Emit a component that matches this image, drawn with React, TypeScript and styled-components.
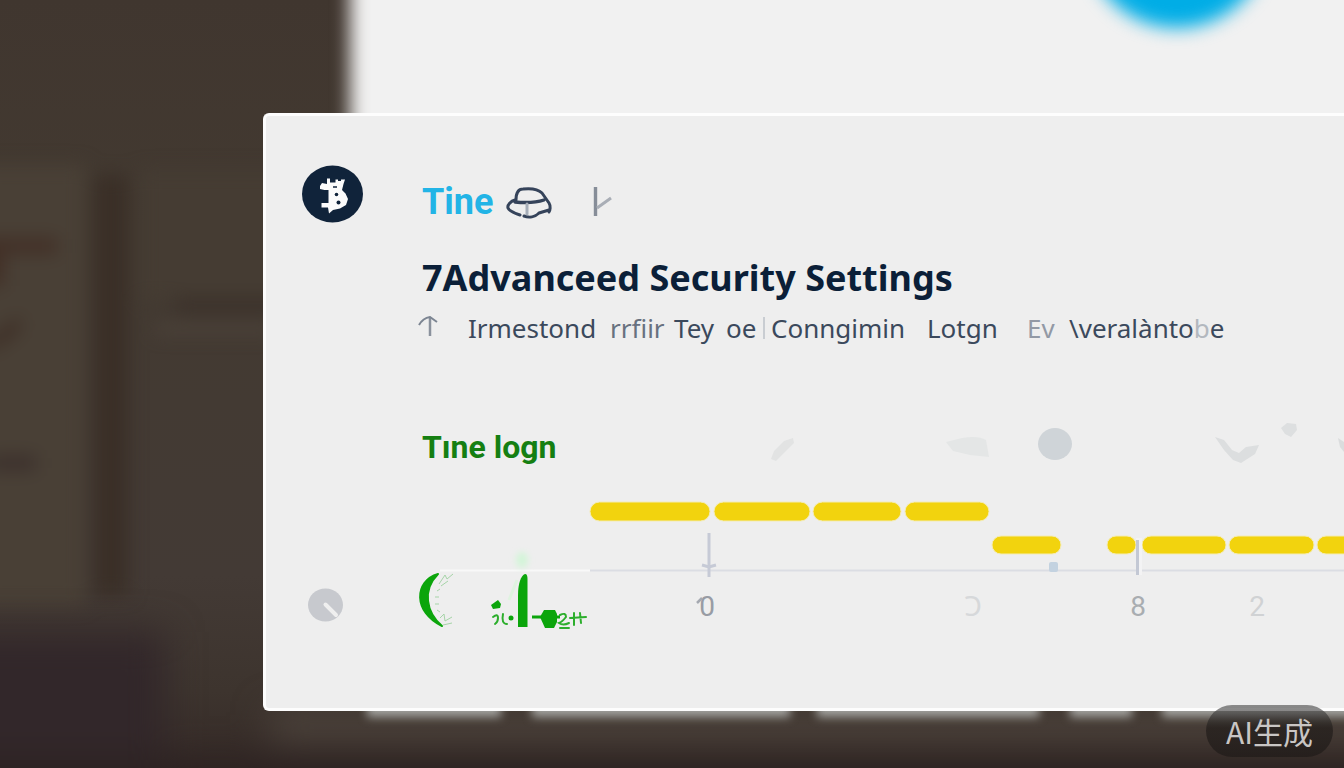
import React from "react";
import styled, { createGlobalStyle } from "styled-components";

const color = {
  ink: "#0b1f38",
  body: "#3b495c",
  faint: "#9299a5",
  pale: "#c9cdd2",
  cyan: "#22b4e6",
  green: "#157f12",
  leaf: "#0ba50b",
  bar: "#f2d30e",
  panel: "#eeeeee",
};

const sans = `"Noto Sans", "Noto Sans CJK SC", sans-serif`;
const display = `Roboto, "Noto Sans", sans-serif`;

const GlobalStyle = createGlobalStyle`
  *, *::before, *::after { box-sizing: border-box; }
  body { margin: 0; background: #3e342e; font-family: ${sans}; color: ${color.ink}; }
  h1, h2, p { margin: 0; }
`;

const Page = styled.div`
  position: relative;
  min-height: 100vh;
  padding: 113px 0 56px 263px;
  overflow: hidden;
`;

const Backdrop = styled.svg`
  position: absolute;
  inset: 0;
  width: 100%;
  height: 100%;

  filter {
    color-interpolation-filters: sRGB;
  }
`;

const Panel = styled.main`
  position: relative;
  padding: 48px 0 32px 36px;
  background: ${color.panel};
  border: 3px solid #fdfdfd;
  border-right: 0;
  border-radius: 6px 0 0 6px;
  display: grid;
  grid-template-columns: 120px minmax(0, 1fr);
  overflow: hidden;
`;

const RailIcon = styled.svg<{ $inset?: number }>`
  display: block;
  align-self: end;
  margin-left: ${(p) => p.$inset ?? 0}px;
`;

const Badge = styled(RailIcon)`
  align-self: start;
`;

const Header = styled.header`
  display: flex;
  flex-direction: column;
`;

const BrandRow = styled.div`
  display: flex;
  align-items: center;
  height: 76px;
  gap: 12px;
`;

const Brand = styled.a`
  font: 700 36px/40px ${display};
  color: ${color.cyan};
  text-decoration: none;
`;

const BrandIcon = styled.svg`
  display: block;
  flex: none;
`;

const Title = styled.h1`
  font: 700 36px/44px ${sans};
  white-space: nowrap;
  padding-top: 16px;
`;

const Summary = styled.p`
  display: grid;
  grid-template-columns: 46px 142px 64px 52px 37px 8px 156px 100px 42px auto;
  justify-content: start;
  font: 400 26px/56px ${sans};
  white-space: nowrap;
`;

const Word = styled.span<{ $tone?: string }>`
  color: ${(p) => p.$tone ?? color.body};
`;

const Caret = styled.span`
  align-self: center;
  height: 22px;
  border-left: 2px solid ${color.pale};
`;

const ArrowMark = styled.svg`
  display: block;
  margin-top: 14px;
`;

const SectionHead = styled.div`
  grid-column: 2;
  display: flex;
  align-items: center;
  justify-content: space-between;
  height: 64px;
  margin-top: 59px;
`;

const SectionTitle = styled.h2`
  font: 700 32px/40px ${display};
  color: ${color.green};
  white-space: nowrap;
`;

const Marks = styled.svg`
  display: block;
  flex: none;
`;

const Timeline = styled.svg`
  display: block;
  overflow: visible;
`;

const Tick = styled.text<{ $tone: string }>`
  font: 400 28px ${display};
  fill: ${(p) => p.$tone};
  text-anchor: middle;
`;

const Watermark = styled.aside`
  position: absolute;
  right: 11px;
  bottom: 11px;
  padding: 0 20px;
  border-radius: 26px;
  background: linear-gradient(rgba(70, 70, 70, 0.6), rgba(28, 24, 22, 0.62) 45%);
  color: #c9c6c4;
  font: 400 30px/52px "Noto Sans CJK SC", sans-serif;
`;

const bars = [
  { x: 590, y: 502, w: 120, h: 19 },
  { x: 714, y: 502, w: 96, h: 19 },
  { x: 813, y: 502, w: 88, h: 19 },
  { x: 905, y: 502, w: 84, h: 19 },
  { x: 992, y: 536, w: 69, h: 18 },
  { x: 1107, y: 536, w: 29, h: 18 },
  { x: 1142, y: 536, w: 84, h: 18 },
  { x: 1229, y: 536, w: 85, h: 18 },
  { x: 1317, y: 536, w: 60, h: 18 },
];

const ticks = [
  { x: 707, label: "0", tone: "#989ca4" },
  { x: 973, label: "Ɔ", tone: "#d6d8da" },
  { x: 1138, label: "8", tone: "#a9adb1" },
  { x: 1257, label: "2", tone: "#d0d2d4" },
];

function Scene() {
  return (
    <Backdrop viewBox="0 0 1344 768" preserveAspectRatio="none" aria-hidden="true">
      <defs>
        <filter id="soft" x="-50%" y="-50%" width="200%" height="200%">
          <feGaussianBlur stdDeviation="9" />
        </filter>
        <filter id="mist" filterUnits="userSpaceOnUse" x="-200" y="560" width="1744" height="400">
          <feGaussianBlur stdDeviation="18" />
        </filter>
        <filter id="edge" filterUnits="userSpaceOnUse" x="300" y="640" width="1200" height="120">
          <feGaussianBlur stdDeviation="5" />
        </filter>
        <linearGradient id="wall" x1="0" y1="0" x2="0" y2="1">
          <stop offset="0" stopColor="#40362f" />
          <stop offset="0.3" stopColor="#433a31" />
          <stop offset="0.75" stopColor="#433a35" />
          <stop offset="0.9" stopColor="#3d342e" />
          <stop offset="1" stopColor="#352a27" />
        </linearGradient>
      </defs>
      <rect width="1344" height="768" fill="url(#wall)" />
      <g filter="url(#soft)">
        <rect x="-20" y="165" width="105" height="440" fill="#494036" />
        <rect x="94" y="175" width="34" height="420" fill="#3a2f27" />
        <rect x="140" y="170" width="150" height="130" fill="#453c33" />
        <rect x="-20" y="238" width="78" height="16" fill="#422f26" />
        <rect x="-20" y="242" width="24" height="44" fill="#422f26" />
        <path d="M-10 340L20 316V330L-10 352Z" fill="#3c2b23" />
        <rect x="-10" y="456" width="46" height="14" fill="#3a2e2b" />
        <rect x="175" y="297" width="110" height="16" fill="#3c322b" />
        <rect x="155" y="325" width="120" height="8" fill="#4e453c" />
      </g>
      <g filter="url(#mist)">
        <rect x="-60" y="632" width="225" height="190" fill="#32272a" />
        <rect x="270" y="712" width="1140" height="26" fill="#514840" />
        <rect x="-60" y="760" width="1460" height="60" fill="#2c2221" />
      </g>
      <rect x="350" y="-60" width="1100" height="230" fill="#f1f1f1" filter="url(#soft)" />
      <circle cx="1177" cy="-64" r="92" fill="#00ade6" filter="url(#soft)" />
      <g filter="url(#edge)" fill="#a3a39f">
        <rect x="367" y="690" width="134" height="27" />
        <rect x="532" y="690" width="258" height="27" />
        <rect x="817" y="690" width="222" height="27" />
        <rect x="1070" y="690" width="62" height="27" />
        <rect x="1162" y="690" width="240" height="27" />
      </g>
    </Backdrop>
  );
}

function CoinBadge() {
  return (
    <Badge width="62" height="60" viewBox="302 164 62 60" role="img" aria-label="Coin">
      <ellipse cx="332.500" cy="194" rx="30.500" ry="28.500" fill="#10233a" />
      <path
        d="M327 178.500H330V182.500H335.500V179.500H338V181H341V179.500H345L343.500 184L342 190L345.500 193.500L348 199L346 205L340 208.500L333 210L329 213.500L328 207.500H321.500V203H328.500V197.500V190H324.500L320 189V186L322 183L327 184Z"
        fill="#fbfbfb"
      />
      <path d="M333 187H337" stroke="#10233a" strokeWidth="1.500" />
      <circle cx="336.500" cy="194.500" r="1.800" fill="#10233a" />
      <circle cx="338.500" cy="202.500" r="2" fill="#10233a" />
    </Badge>
  );
}

function Gauge() {
  return (
    <RailIcon $inset={6} width="36" height="88" viewBox="308 587 36 88" role="img" aria-label="Gauge">
      <ellipse cx="325.500" cy="604" rx="17.500" ry="16.500" fill="#c7c9ce" />
      <path d="M325.500 603.500L336 614" stroke="#efefef" strokeWidth="4" strokeLinecap="round" />
    </RailIcon>
  );
}

function HelmetIcon() {
  return (
    <BrandIcon width="48" height="34" viewBox="505 185 48 34" fill="none" stroke="#35435a" strokeWidth="3" strokeLinecap="round" strokeLinejoin="round" aria-hidden="true">
      <path d="M516 200C516 194 518 189 523 189C532 188 538 189 542 193L549 203C551 206 550 211 549 212" />
      <path d="M515 200C511 201 507 205 508 208C509 211 514 213 520 215" />
      <path d="M515 202C525 203 535 203 544 200" strokeWidth="3.400" />
      <path d="M524 216C529 218 535 217 539 213L549 210" />
      <path d="M527 204V214" strokeWidth="3" stroke="#a5adb8" />
    </BrandIcon>
  );
}

function BranchIcon() {
  return (
    <BrandIcon width="50" height="34" viewBox="565 185 50 34" fill="none" aria-hidden="true">
      <path d="M595.500 187V216" stroke="#868d98" strokeWidth="3.400" />
      <path d="M597 208L611 198" stroke="#a9aeb6" strokeWidth="3" />
    </BrandIcon>
  );
}

function FaintMarks() {
  return (
    <Marks width="580" height="64" viewBox="764 415 580 64" aria-hidden="true">
      <path d="M771 459L774 451L784 441L793 438L794 443L784 453L776 461Z" fill="#e2e3e3" />
      <path d="M946 442L962 438Q978 435 986 440L989 457L970 455L953 451Z" fill="#e4e6e6" />
      <ellipse cx="1055" cy="444" rx="17" ry="16" fill="#cfd4d8" />
      <path d="M1215 437L1224 440L1232 450L1239 453L1246 447L1259 445L1255 454L1241 463L1233 460L1224 450Z" fill="#dcdedf" />
      <path d="M1281 428L1287 423L1296 424L1297 430L1291 437L1285 434Z" fill="#dddfe0" />
      <path d="M1338 438L1344 442V452L1340 447Z" fill="#dadcdd" />
    </Marks>
  );
}

function TimelineChart() {
  return (
    <Timeline width="922" height="197" viewBox="422 479 922 197" role="img" aria-label="Time log">
      <defs>
        <filter id="glow" x="-100%" y="-100%" width="300%" height="300%">
          <feGaussianBlur stdDeviation="3" />
        </filter>
      </defs>
      <path d="M440 570.500H590" stroke="#f8f8f8" strokeWidth="2" />
      <path d="M590 570.500H1400" stroke="#dbdde3" strokeWidth="2" />
      {bars.map((b) => (
        <rect key={b.x} x={b.x} y={b.y} width={b.w} height={b.h} rx={b.h / 2} fill={color.bar} stroke="#f4ecb4" strokeWidth="1" />
      ))}
      <g fill="none" stroke="#c6cad6">
        <path d="M709 533V577" strokeWidth="3" />
        <path d="M702 565L709 567L716 565" strokeWidth="3" />
      </g>
      <rect x="1136" y="538" width="6" height="37" fill="#f3f3f4" />
      <path d="M1137.500 540V575" stroke="#c3c8d4" strokeWidth="3" />
      <rect x="1049" y="562" width="9" height="10" rx="2" fill="#c3d2e0" />
      {ticks.map((t) => (
        <Tick key={t.label} x={t.x} y={616} $tone={t.tone}>
          {t.label}
        </Tick>
      ))}
      <path d="M697 603L702 598" stroke="#a5a9b1" strokeWidth="2.500" />

      <ellipse cx="522" cy="560" rx="6" ry="8" fill="#d3f5d8" filter="url(#glow)" />
      <path d="M438 574C414 581 413 612 442 626C426 612 422 590 438 574Z" fill={color.leaf} stroke={color.leaf} strokeWidth="2" strokeLinejoin="round" />
      <g fill="none" stroke="#a6d4a8" strokeWidth="1">
        <path d="M439 584L445 575L447 579L453 574M441 586L448 581M437 591L440 589M435 597H439M435 604H439M437 610L440 612M440 618L444 614L445 621L452 617M443 625L452 623" />
      </g>
      <path d="M509 600L517 580" stroke="#dff3e0" strokeWidth="3" />
      <path d="M518 627V595C518 584 521 575 525 574C527 574 527.500 576 527.500 579V627Z" fill={color.leaf} />
      <path d="M491 605L498 600L501 604L500 608L493 609Z" fill={color.leaf} />
      <g fill="none" stroke="#2cae2c" strokeWidth="2" strokeLinecap="round">
        <path d="M493 617Q498 613 498 618Q498 622 495 624" />
        <path d="M503 614Q501 624 507 624" />
        <path d="M560 615Q566 612 566 617Q562 622 559 623Q563 626 569 623" />
        <path d="M560 628H569M574 613V625M570 618L586 617M580 613L581 623" />
      </g>
      <circle cx="511" cy="618" r="2.500" fill={color.leaf} />
      <path d="M532 617H541" stroke={color.leaf} strokeWidth="3" />
      <path d="M540 617L544 610H555L557 614V622L554 628H545Z" fill={color.leaf} />
      <path d="M556 617H560" stroke={color.leaf} strokeWidth="3" />
    </Timeline>
  );
}

export default function App() {
  return (
    <>
      <GlobalStyle />
      <Page>
        <Scene />
        <Panel>
          <CoinBadge />
          <Header>
            <BrandRow>
              <Brand href="#">Tine</Brand>
              <HelmetIcon />
              <BranchIcon />
            </BrandRow>
            <Title>7Advanceed Security Settings</Title>
            <Summary>
              <ArrowMark width="26" height="24" viewBox="422 314 26 24" fill="none" overflow="visible" aria-hidden="true">
                <path d="M430 336V317" stroke="#8a919c" strokeWidth="2.500" />
                <path d="M419 325Q423 318 430 317L437 322" stroke="#7c8592" strokeWidth="2" />
              </ArrowMark>
              <Word>Irmestond</Word>
              <Word $tone="#68717f">rrfiir</Word>
              <Word>Tey</Word>
              <Word>oe</Word>
              <Caret />
              <Word>Conngimin</Word>
              <Word>Lotgn</Word>
              <Word $tone={color.faint}>Ev</Word>
              <Word>
                \veralànto<Word $tone="#b3b8bf">b</Word>e
              </Word>
            </Summary>
          </Header>
          <SectionHead>
            <SectionTitle>Tıne logn</SectionTitle>
            <FaintMarks />
          </SectionHead>
          <Gauge />
          <TimelineChart />
        </Panel>
        <Watermark>AI生成</Watermark>
      </Page>
    </>
  );
}
